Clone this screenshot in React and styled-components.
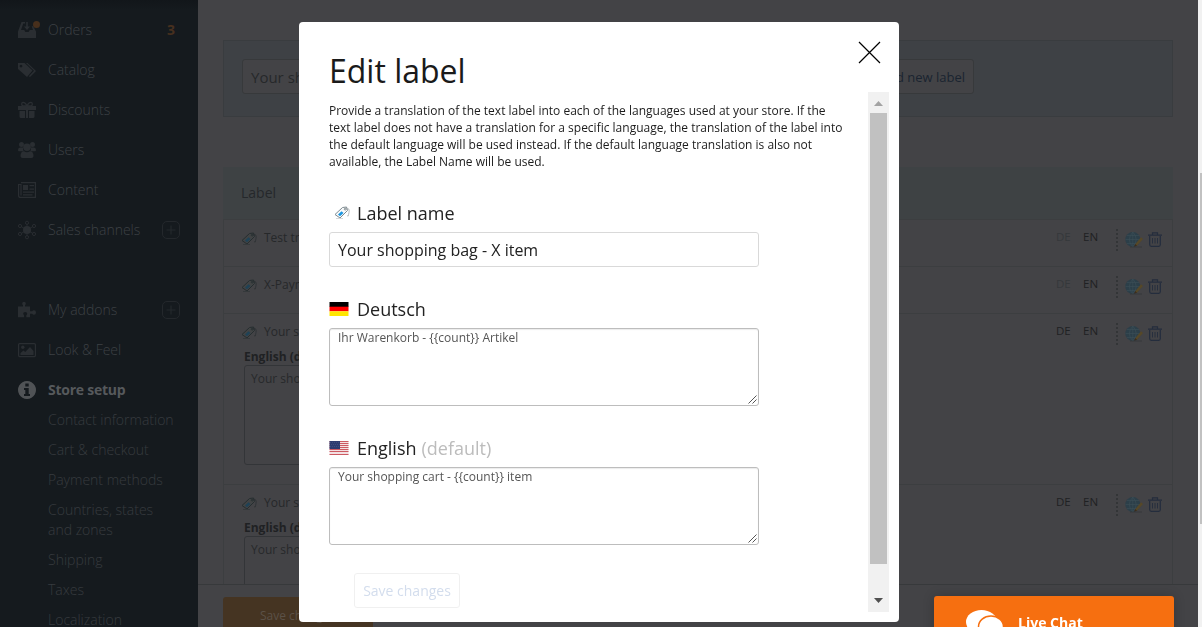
import React from "react";
import styled, { createGlobalStyle } from "styled-components";

const Global = createGlobalStyle`
  *, *::before, *::after { box-sizing: border-box; }
  html, body { margin: 0; padding: 0; overflow: hidden; }
  body { font-family: "Open Sans", "Noto Sans", sans-serif; background: #434346; }
`;

const Page = styled.div`
  display: grid;
  grid-template-columns: 198px 1000px 4px;
  height: 627px;
  overflow: hidden;
`;

/* ---------- sidebar ---------- */
const Sidebar = styled.nav`
  background: linear-gradient(#12161a, #151a1e 10px);
  padding-top: 10px;
  height: 627px;
  overflow: hidden;
  font-weight: 300;
  font-size: 14px;
  line-height: 20px;
  color: #3d4145;
`;
const NavItem = styled.div`
  display: flex;
  align-items: center;
  height: 40px;
  padding: 0 18px;
  margin-top: ${(p) => (p.$gap ? 40 : 0)}px;
  gap: 12px;
  color: ${(p) => (p.$active ? "#56595c" : "#3d4145")};
  font-weight: ${(p) => (p.$active ? 700 : 300)};
  letter-spacing: ${(p) => (p.$active ? -0.25 : 0)}px;
  svg { flex: none; overflow: visible; color: ${(p) => (p.$active ? "#505356" : "#2a2e32")}; }
`;
const NavText = styled.span`
  flex: 1;
  white-space: nowrap;
`;
const NavCount = styled.span`
  color: #47301f;
  font-weight: 700;
  padding-right: 5px;
`;
const SubList = styled.div`
  display: flex;
  flex-direction: column;
  gap: 10px;
  padding-left: 48px;
`;
const SubItem = styled.div`
  width: 130px;
  color: #373b3f;
`;

/* ---------- main ---------- */
const Main = styled.main`
  display: flex;
  flex-direction: column;
  height: 627px;
  padding-top: 40px;
  overflow: hidden;
`;
const SearchPanel = styled.section`
  display: flex;
  justify-content: space-between;
  flex: none;
  margin: 0 25px;
  height: 77px;
  padding: 18px 198px 0 18px;
  background: #3e4145;
  border: 1px solid #393c3f;
`;
const SearchField = styled.div`
  width: 430px;
  height: 35px;
  border: 1px solid #37393b;
  border-radius: 3px;
  background: #434346;
  padding: 0 8px;
  font-size: 15px;
  line-height: 35px;
  color: #26282a;
`;
const AddButton = styled.div`
  height: 35px;
  border: 1px solid #37393b;
  border-radius: 3px;
  background: #434346;
  padding: 0 8px;
  font-size: 13px;
  line-height: 34px;
  color: #1a2430;
`;
const Table = styled.section`
  flex: 1;
  min-height: 0;
  overflow: hidden;
  margin: 50px 25px 0;
`;
const TableHead = styled.div`
  height: 52px;
  background: #3e4244;
  padding-left: 18px;
  font-size: 14px;
  line-height: 52px;
  color: #25282b;
`;
const Row = styled.div`
  height: ${(p) => p.$h}px;
  border: solid #3c3e40;
  border-width: 1px 1px 0;
  padding: 9px 10px 0 17px;
`;
const RowTop = styled.div`
  display: flex;
  height: 22px;
  font-size: 12px;
  line-height: 17px;
  color: #26282a;
`;
const RowName = styled.div`
  flex: 1;
  display: flex;
  gap: 7px;
  svg { margin-top: 3px; }
`;
const Lang = styled.span`
  width: ${(p) => p.$w || 27}px;
  font-size: 11.5px;
  line-height: 16px;
  color: ${(p) => (p.$off ? "#35383b" : "#1f2123")};
`;
const RowActions = styled.div`
  display: flex;
  gap: 5px;
  margin-left: 4px;
  border-left: 2px dotted #333537;
  padding: 3px 0 0 7px;
`;
const RowLang = styled.div`
  padding-left: 3px;
  margin-top: 3px;
  font-size: 12px;
  line-height: 17px;
  font-weight: 700;
  color: #1f2123;
`;
const RowText = styled.div`
  margin-left: 3px;
  width: 430px;
  height: 100px;
  border: 1px solid #333538;
  border-radius: 3px;
  padding: 3px 6px;
  font-size: 12px;
  line-height: 20px;
  color: #27292b;
`;
const Footer = styled.footer`
  flex: none;
  height: 43px;
  border-top: 1px solid #37393b;
  padding: 12px 25px 0;
`;
const SaveBar = styled.div`
  width: 150px;
  height: 40px;
  background: #453422;
  border-radius: 3px;
  color: #5b5147;
  font-size: 12px;
  line-height: 37px;
  padding-left: 37px;
`;
const PageTrack = styled.div`
  background: #f1f1f1;
  padding: 173px 0 0 2px;
`;
const PageThumb = styled.div`
  height: 351px;
  background: #c1c1c1;
`;

/* ---------- chat ---------- */
const Chat = styled.div`
  position: fixed;
  left: 934px;
  top: 596px;
  width: 240px;
  height: 40px;
  display: flex;
  gap: 14px;
  padding: 13px 32px 0;
  background: #f66f10;
  border-radius: 3px 3px 0 0;
  box-shadow: 0 0 12px rgba(0, 0, 0, 0.2);
  color: #fff;
  font-weight: 700;
  font-size: 14px;
  line-height: 27px;
`;

/* ---------- dialog ---------- */
const Dialog = styled.div`
  position: fixed;
  left: 299px;
  top: 22px;
  width: 600px;
  height: 600px;
  display: flex;
  flex-direction: column;
  background: #fff;
  border-radius: 4px;
  color: #222;
`;
const DialogHead = styled.header`
  display: flex;
  justify-content: space-between;
  height: 70px;
  padding: 19px 18px 0 30px;
`;
const Title = styled.h1`
  margin: 8px 0 0;
  font-size: 32px;
  line-height: 44px;
  font-weight: 400;
  color: #1a1a1a;
`;
const DialogBody = styled.div`
  display: flex;
  height: 520px;
  padding-right: 10px;
`;
const Form = styled.div`
  flex: 1;
  padding: 10px 20px 0 30px;
`;
const Intro = styled.p`
  margin: 0;
  height: 68px;
  font-size: 12px;
  line-height: 17px;
  white-space: nowrap;
  color: #1c1c1c;
`;
const Field = styled.div`
  margin-top: ${(p) => p.$mt}px;
`;
const FieldLabel = styled.div`
  display: flex;
  align-items: center;
  height: 24px;
  margin-bottom: 7px;
  font-size: 18px;
  line-height: 24px;
`;
const LabelIcon = styled.span`
  width: 28px;
  display: flex;
  padding-left: ${(p) => p.$indent || 0}px;
`;
const Muted = styled.span`
  color: #bcbcbc;
  margin-left: 5px;
`;
const TextInput = styled.div`
  width: 430px;
  height: 35px;
  border: 1px solid #d9d9d9;
  border-radius: 3px;
  padding: 0 8px;
  font-size: 16px;
  line-height: 34px;
`;
const TextArea = styled.div`
  display: flex;
  justify-content: space-between;
  width: 430px;
  height: 78px;
  border: 1px solid #bdbdbd;
  border-radius: 3px;
  box-shadow: inset 0 1px 1px rgba(0, 0, 0, 0.08);
  padding: 0 1px 1px 8px;
  font-size: 12px;
  line-height: 18px;
  color: #555;
  svg { align-self: flex-end; }
`;
const SaveButton = styled.button`
  display: block;
  margin: 28px 0 0 25px;
  width: 106px;
  height: 35px;
  padding: 0;
  border: 1px solid #f0f0f0;
  border-radius: 3px;
  background: #fff;
  font: 14px/33px "Open Sans", sans-serif;
  color: #d3dded;
`;
const Track = styled.div`
  width: 21px;
  background: #f1f1f1;
  display: flex;
  flex-direction: column;
  align-items: center;
`;
const Arrow = styled.div`
  height: 21px;
  display: flex;
  align-items: center;
  padding-top: ${(p) => p.$pt || 0}px;
`;
const Thumb = styled.div`
  width: 17px;
  height: 451px;
  background: #c1c1c1;
  margin-bottom: 26px;
`;

/* ---------- drawings ---------- */
const Ico = ({ children }) => (
  <svg width="18" height="18" viewBox="0 0 18 18" fill="currentColor">{children}</svg>
);
const icons = {
  orders: (
    <Ico>
      <path d="M3.500 1h3.500v1.500H5.300L3 9h3.200l1.200 2h3.200l1.200-2H15l-1.300-3.500L15 5l3 5.500V17H0v-6.500z" />
      <path d="M8.200 1h1.600v4.500h2.200L9 9 6 5.500h2.200z" />
      <circle cx="18.500" cy="3.500" r="3.500" fill="#472f1c" />
    </Ico>
  ),
  catalog: (
    <Ico>
      <path fillRule="evenodd" d="M0 2h6.500l8 7.500L9 16 0 8zM3 3.700a1.400 1.400 0 1 0 .01 0z" />
      <path d="M8 2h1.500l8.500 8-6 6-1.200-.7 5.200-5.500z" />
    </Ico>
  ),
  discounts: (
    <Ico>
      <path d="M0 5h18v4H0zM1.500 10H7v7H3a1.500 1.500 0 0 1-1.500-1.500zM11 10h5.500v5.500A1.500 1.500 0 0 1 15 17h-4z" />
      <path d="M8 9h2v8H8z" />
      <path d="M9 5C8 2.500 6.500 1.300 5 1.300S3 4.500 5 4.800zM9 5c1-2.500 2.500-3.700 4-3.700s2 3.200 0 3.500z" fill="none" stroke="currentColor" strokeWidth="1.300" />
    </Ico>
  ),
  users: (
    <Ico>
      <circle cx="3.500" cy="3.500" r="2.500" /><circle cx="14.500" cy="3.500" r="2.500" />
      <path d="M0 9q0-2.600 2-2.600h3Q4.500 9 6 10.200H1Q0 10.200 0 9zM18 9q0-2.600-2-2.600h-3q.5 2.600-1 3.800h5q1 0 1-1.200z" />
      <circle cx="9" cy="6.300" r="3.800" />
      <path d="M2.500 15q0-4.700 3.500-4.700 3 2 6 0 3.500 0 3.500 4.700 0 2-2 2h-9q-2 0-2-2z" />
    </Ico>
  ),
  content: (
    <Ico>
      <path d="M3 1.600h14.400v14.800H2.500q-1.900 0-1.900-2V3.500H3v11" fill="none" stroke="currentColor" strokeWidth="1.200" />
      <path d="M5 4h5v5H5zM11.500 4H16v1.200h-4.500zM11.500 7.500H16v1.200h-4.500zM5 10.500h11v1.200H5zM5 13.200h9.500v1.200H5z" />
    </Ico>
  ),
  channels: (
    <Ico>
      <circle cx="9" cy="9" r="4" />
      <path d="M9 2v14M3 5.500l12 7M3 12.500l12-7" stroke="currentColor" strokeWidth=".8" />
      {[[9, 1.8], [9, 16.2], [2, 5], [16, 5], [2, 13], [16, 13]].map(([x, y]) => (
        <circle key={`${x}-${y}`} cx={x} cy={y} r="1.600" fill="#151a1e" stroke="currentColor" strokeWidth=".9" />
      ))}
    </Ico>
  ),
  addons: (
    <Ico>
      <path d="M0 5.500h5V4.200Q4.200 3.500 4.200 2.500 4.200.7 6 .7t1.800 1.800q0 1-.8 1.700v1.300h5v4.800h2.200q.5-1 1.800-1 2 0 2 2.200t-2 2.200q-1.200 0-1.800-1H12v3.600H8.300v-2q.9-.6.9-1.700 0-1.700-2-1.700t-2 1.700q0 1.100.9 1.700v2H0z" />
    </Ico>
  ),
  look: (
    <Ico>
      <rect x=".6" y="2.600" width="16.800" height="13" rx="1" fill="none" stroke="currentColor" strokeWidth="1.200" />
      <circle cx="4.800" cy="6.200" r="1.700" />
      <path d="M2.500 14v-2l3-2.500 1.700 1.500L12 6l3.500 4v4z" />
    </Ico>
  ),
  info: (
    <Ico>
      <path fillRule="evenodd" d="M9 0a9 9 0 1 0 .01 0zM7.300 2.500h3.400v3H7.300zM6 7h4.700v6H12v2H6v-2h1.300V9H6z" />
    </Ico>
  ),
};

const PlusBox = () => (
  <svg width="18" height="18" viewBox="0 0 18 18" fill="none" stroke="#24282c">
    <rect x=".5" y=".5" width="17" height="17" rx="4.500" />
    <path d="M9 4.500v9M4.500 9h9" strokeWidth="1.200" />
  </svg>
);

const TagIcon = ({ dim }) => (
  <svg width="16" height="14" viewBox="0 0 16 14" fill="none">
    <path d="M1 8.500L8.500 1.500l4-.5 1 3.500L6 12z" fill={dim ? "#414344" : "#f7f9fa"} stroke={dim ? "#262e30" : "#7d8a90"} />
    <path d="M4 8.500l3.500-3.300 2 1.800L6 10.300z" fill={dim ? "#1f4256" : "#1b96e0"} />
    <circle cx="11.200" cy="3.200" r=".9" stroke={dim ? "#262e30" : "#6f7b80"} strokeWidth=".8" />
    <path d="M11.500 3Q16 1 15 6.500t-1.500 3" stroke={dim ? "#2b3032" : "#a3a9ac"} strokeWidth=".8" />
    <path d="M2 12.500h7" stroke={dim ? "#35393b" : "#d5d8da"} />
  </svg>
);

const GlobeIcon = () => (
  <svg width="18" height="16" viewBox="0 0 18 16" fill="none">
    <circle cx="7.800" cy="7.500" r="7.500" fill="#2c3f49" />
    <path d="M7.800 0v15M.5 7.500h15M2 3.500h12M2 11.500h12M7.800 0Q1 7.500 7.800 15M7.800 0Q14.600 7.500 7.800 15" stroke="#3d4f58" strokeWidth=".6" />
    <path d="M9.500 14.200l1-2.500L16 5.200l2 1.800-6 6.700z" fill="#564828" />
    <path d="M9 14.700l1.300-2.800L12 13.700z" fill="#3c2c1c" />
    <path d="M5 15h12" stroke="#343638" strokeWidth=".8" />
  </svg>
);

const TrashIcon = () => (
  <svg width="14" height="15" viewBox="0 0 14 15" fill="none" stroke="#242d3d" strokeWidth="1.200">
    <path d="M0 3.200h14M4.500 3V.8h5V3M1.700 4v8.800q0 1.500 1.500 1.500h7.600q1.500 0 1.500-1.500V4" />
    <path d="M4.500 6v5.500M7 6v5.500M9.500 6v5.500" strokeWidth=".9" />
  </svg>
);

const CloseIcon = () => (
  <svg width="23" height="23" viewBox="0 0 23 23" stroke="#000" strokeWidth="1.200">
    <path d="M1 1l21 21M22 1L1 22" />
  </svg>
);

const Grip = () => (
  <svg width="9" height="9" viewBox="0 0 9 9" stroke="#555" strokeWidth="1">
    <path d="M.5 8.500l8-8M4.500 8.500l4-4" />
  </svg>
);

const Triangle = ({ up }) => (
  <svg width="9" height="5" viewBox="0 0 9 5" fill={up ? "#a3a3a3" : "#505050"}>
    <path d={up ? "M0 5L4.500 0 9 5z" : "M0 0h9L4.500 5z"} />
  </svg>
);

const GermanFlag = () => (
  <svg width="20" height="14" viewBox="0 0 20 14">
    <path fill="#000" d="M.5 0h19v5H.5z" />
    <path fill="#f00" d="M.5 4.700h19v4.600H.5z" />
    <path fill="#ffe600" d="M.5 9.300h19V14H.5z" />
  </svg>
);

const UsFlag = () => (
  <svg width="20" height="14" viewBox="0 0 20 14">
    <path fill="#f3dfe1" d="M.5 0h19v14H.5z" />
    {[0, 2, 4, 6, 8, 10, 13].map((y) => (
      <path key={y} fill="#cc5a62" d={`M.5 ${y}h19v1H.5z`} />
    ))}
    <path fill="#2c3c70" d="M.5 0H11v8H.5z" />
    <path d="M1 1.500h10M2 3.500h9M1 5.500h10" stroke="#4b5a88" strokeWidth=".6" strokeDasharray="1 1" />
  </svg>
);

const ChatIcon = () => (
  <svg width="38" height="34" viewBox="0 0 38 34" fill="#fff">
    <ellipse cx="15.500" cy="13" rx="15.500" ry="12" />
    <ellipse cx="25" cy="17.500" rx="12.500" ry="10.500" stroke="#f66f10" strokeWidth="1.500" />
  </svg>
);

const nav = [
  { icon: "orders", text: "Orders", count: "3" },
  { icon: "catalog", text: "Catalog" },
  { icon: "discounts", text: "Discounts" },
  { icon: "users", text: "Users" },
  { icon: "content", text: "Content" },
  { icon: "channels", text: "Sales channels", plus: true },
  { icon: "addons", text: "My addons", plus: true, gap: true },
  { icon: "look", text: "Look & Feel" },
  { icon: "info", text: "Store setup", active: true },
];

const subNav = [
  "Contact information", "Cart & checkout", "Payment methods",
  "Countries, states and zones", "Shipping", "Taxes", "Localization",
];

const rows = [
  { name: "Test translation", h: 47, noDe: true },
  { name: "X-Payments", h: 47, noDe: true },
  { name: "Your shopping bag", h: 171, text: "Your shopping cart" },
  { name: "Your shopping bag", h: 171, text: "Your shopping cart" },
];

export default function App() {
  return (
    <>
      <Global />
      <Page>
        <Sidebar>
          {nav.map((n) => (
            <NavItem key={n.text} $gap={n.gap} $active={n.active}>
              {icons[n.icon]}
              <NavText>{n.text}</NavText>
              {n.count && <NavCount>{n.count}</NavCount>}
              {n.plus && <PlusBox />}
            </NavItem>
          ))}
          <SubList>
            {subNav.map((s) => <SubItem key={s}>{s}</SubItem>)}
          </SubList>
        </Sidebar>
        <Main>
          <SearchPanel>
            <SearchField>Your shopping bag</SearchField>
            <AddButton>Add new label</AddButton>
          </SearchPanel>
          <Table>
            <TableHead>Label</TableHead>
            {rows.map((r, i) => (
              <Row key={i} $h={r.h}>
                <RowTop>
                  <RowName><TagIcon dim />{r.name}</RowName>
                  <Lang $off={r.noDe}>DE</Lang>
                  <Lang $w={29}>EN</Lang>
                  <RowActions><GlobeIcon /><TrashIcon /></RowActions>
                </RowTop>
                {r.text && (
                  <>
                    <RowLang>English (default)</RowLang>
                    <RowText>{r.text}</RowText>
                  </>
                )}
              </Row>
            ))}
          </Table>
          <Footer><SaveBar>Save changes</SaveBar></Footer>
        </Main>
        <PageTrack><PageThumb /></PageTrack>
      </Page>

      <Chat><ChatIcon />Live Chat</Chat>

      <Dialog role="dialog">
        <DialogHead>
          <Title>Edit label</Title>
          <CloseIcon />
        </DialogHead>
        <DialogBody>
          <Form>
            <Intro>
              Provide a translation of the text label into each of the languages used at your store. If the<br />
              text label does not have a translation for a specific language, the translation of the label into<br />
              the default language will be used instead. If the default language translation is also not<br />
              available, the Label Name will be used.
            </Intro>
            <Field $mt={31}>
              <FieldLabel><LabelIcon $indent={5}><TagIcon /></LabelIcon>Label name</FieldLabel>
              <TextInput>Your shopping bag - X item</TextInput>
            </Field>
            <Field $mt={30}>
              <FieldLabel><LabelIcon><GermanFlag /></LabelIcon>Deutsch</FieldLabel>
              <TextArea>{"Ihr Warenkorb - {{count}} Artikel"}<Grip /></TextArea>
            </Field>
            <Field $mt={30}>
              <FieldLabel><LabelIcon><UsFlag /></LabelIcon>English<Muted>(default)</Muted></FieldLabel>
              <TextArea>{"Your shopping cart - {{count}} item"}<Grip /></TextArea>
            </Field>
            <SaveButton>Save changes</SaveButton>
          </Form>
          <Track>
            <Arrow $pt={2}><Triangle up /></Arrow>
            <Thumb />
            <Arrow><Triangle /></Arrow>
          </Track>
        </DialogBody>
      </Dialog>
    </>
  );
}
